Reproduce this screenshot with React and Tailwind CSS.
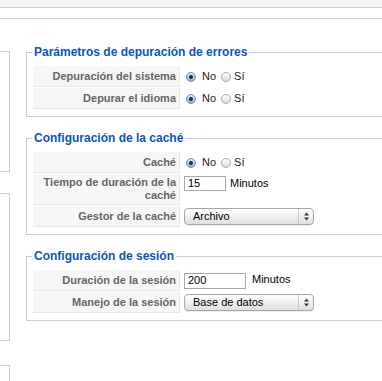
import React from 'react';

const Radio = ({ checked }) =>
  checked ? (
    <span className="block w-[10px] h-[10px] rounded-full border border-[#7592b8] bg-linear-to-b from-[#d7e5f6] to-[#8fb3e2] flex items-center justify-center">
      <span className="block w-[4px] h-[4px] rounded-full bg-[#1e2a3c]" />
    </span>
  ) : (
    <span className="block w-[10px] h-[10px] rounded-full border border-[#a8a8a8] bg-linear-to-b from-[#fdfdfd] to-[#dcdcdc]" />
  );

const YesNo = () => (
  <div className="flex items-center ml-[2px] text-[11px] text-[#222]">
    <Radio checked />
    <span className="ml-[6px]">No</span>
    <span className="ml-[5px] flex"><Radio /></span>
    <span className="ml-[3px]">Sí</span>
  </div>
);

const Select = ({ value }) => (
  <div className="w-[130px] h-[17px] rounded-[4px] border border-[#a5a5a5] bg-linear-to-b from-white to-[#e0e0e0] flex items-center text-[11px] text-black shadow-[0_1px_0_#eee]">
    <span className="flex-1 pl-[8px] leading-none">{value}</span>
    <span className="w-[15px] h-full border-l border-[#c9c9c9] flex items-center justify-center">
      <svg width="5" height="9" viewBox="0 0 5 9">
        <path d="M2.5 0.5 L5 3.5 L0 3.5 Z" fill="#333" />
        <path d="M2.5 8.5 L5 5.5 L0 5.5 Z" fill="#333" />
      </svg>
    </span>
  </div>
);

const Row = ({ label, tall, alignTop, children }) => (
  <div className="flex mb-[1px]">
    <div
      className={`w-[147px] ${tall ? 'h-[31px]' : 'h-[21px]'} shrink-0 bg-[#f6f6f6] border-b border-r border-[#e6e6e6] flex items-center justify-end pr-[3px] text-right text-[11px] leading-[13px] font-bold text-[#666]`}
    >
      {label}
    </div>
    <div className={`flex-1 flex ${alignTop ? 'items-start pt-[2px]' : 'items-center'} pl-[4px]`}>
      {children}
    </div>
  </div>
);

const Section = ({ title, className, children }) => (
  <fieldset className={`border border-[#cccccc] pl-[6px] pt-[6px] pb-[6px] w-[420px] ${className}`}>
    <legend className="-ml-[1px] px-[2px] text-[12px] leading-[16px] font-bold text-[#0b55c4]">{title}</legend>
    {children}
  </fieldset>
);

export default function App() {
  return (
    <div className="w-[382px] h-[381px] overflow-hidden bg-white font-['Liberation_Sans',Arial,sans-serif]">
      <div className="h-[8px] bg-[#f4f4f4] border-b border-[#cccccc]" />
      <div className="h-[11px] border-b border-[#cccccc]" />
      <div className="flex">
        <div className="w-[10px] shrink-0 flex flex-col">
          <div className="mt-[32px] h-[121px] border-t border-r border-b border-[#cccccc]" />
          <div className="mt-[21px] h-[148px] border-t border-r border-b border-[#cccccc]" />
          <div className="mt-[24px] h-[40px] border-t border-r border-[#cccccc]" />
        </div>
        <div className="ml-[16px] shrink-0">
          <Section title="Parámetros de depuración de errores" className="mt-[25px]">
            <Row label="Depuración del sistema"><YesNo /></Row>
            <Row label="Depurar el idioma"><YesNo /></Row>
          </Section>

          <Section title="Configuración de la caché" className="mt-[13px]">
            <Row label="Caché"><YesNo /></Row>
            <Row label={<span>Tiempo de duración de la<br />caché</span>} tall alignTop>
              <input
                readOnly
                defaultValue="15"
                className="w-[42px] h-[15px] border border-[#a9a9a9] px-[3px] text-[11px] text-black outline-none"
              />
              <span className="ml-[4px] mt-[1px] text-[11px] leading-[13px] text-black">Minutos</span>
            </Row>
            <Row label="Gestor de la caché"><Select value="Archivo" /></Row>
          </Section>

          <Section title="Configuración de sesión" className="mt-[13px]">
            <Row label="Duración de la sesión">
              <input
                readOnly
                defaultValue="200"
                className="w-[62px] h-[16px] border border-[#a9a9a9] px-[3px] text-[11px] text-black outline-none"
              />
              <span className="ml-[6px] -mt-[3px] text-[11px] leading-[13px] text-black">Minutos</span>
            </Row>
            <Row label="Manejo de la sesión"><Select value="Base de datos" /></Row>
          </Section>
        </div>
      </div>
    </div>
  );
}
